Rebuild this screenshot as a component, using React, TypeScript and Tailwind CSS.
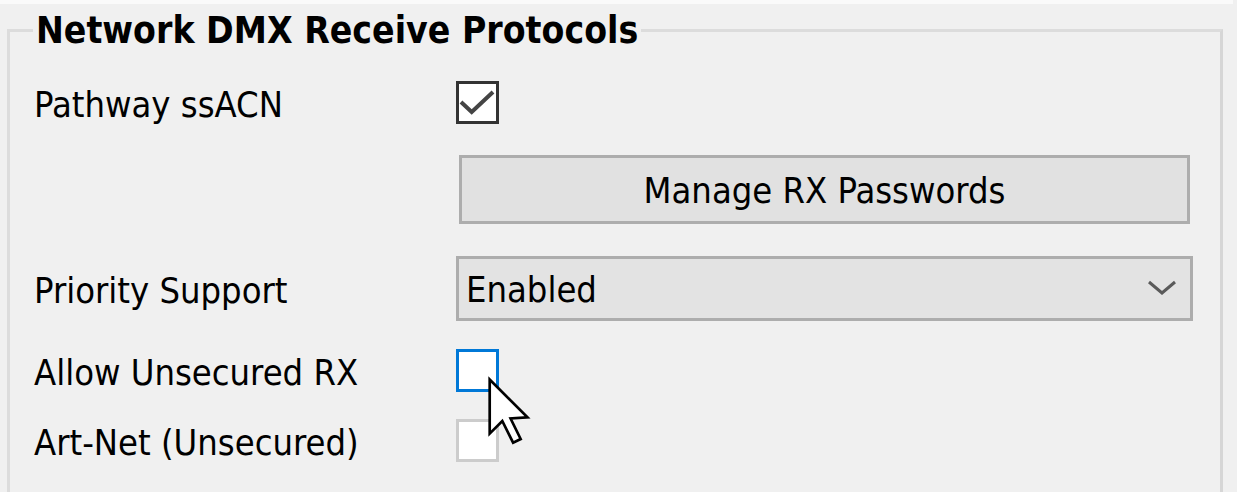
import React from "react";

const font = { fontFamily: '"DejaVu Sans Condensed", "DejaVu Sans", Verdana, sans-serif' };

function Checkbox({ variant }: { variant: "checked" | "focus" | "disabled" }) {
  const border =
    variant === "checked"
      ? "border-[#333333]"
      : variant === "focus"
      ? "border-[#0078d7]"
      : "border-[#cccccc]";
  return (
    <div className={`w-[43px] h-[43px] bg-white border-[3px] ${border} shrink-0`}>
      {variant === "checked" && (
        <svg width="37" height="37" viewBox="0 0 37 37">
          <polyline
            points="2,18 12.7,28 34,8"
            fill="none"
            stroke="#444444"
            strokeWidth="4"
          />
        </svg>
      )}
    </div>
  );
}

function Label({ children }: { children: React.ReactNode }) {
  return (
    <div className="w-[422px] shrink-0 pt-[4px] text-[36px] text-black whitespace-nowrap">{children}</div>
  );
}

export default function App() {
  return (
    <div
      className="relative w-[1237px] h-[492px] overflow-hidden bg-[#f0f0f0] flex flex-col"
      style={font}
    >
      <div className="h-[4px] w-[1233px] bg-[#fafafa] shrink-0" />
      <div className="ml-[7px] mt-[25px] w-[1216px] h-[520px] shrink-0 border-t-[3px] border-l-[3px] border-r-[3px] border-[#dcdcdc] border-r-[#d6d6d6] flex flex-col">
        <div className="mt-[-21px] ml-[23px] px-[3px] w-fit bg-[#f0f0f0] h-[40px] leading-[40px] text-[37px] font-bold text-black whitespace-nowrap">
          Network DMX Receive Protocols
        </div>
        <div className="pl-[24px] pr-[27px] flex flex-col">
          <div className="mt-[30px] h-[43px] flex items-center">
            <Label>Pathway ssACN</Label>
            <Checkbox variant="checked" />
          </div>
          <div className="mt-[31px] h-[69px] flex items-center">
            <div className="w-[422px] shrink-0" />
            <div className="flex-1 mx-[3px] h-full pt-[2px] bg-[#e1e1e1] border-[3px] border-[#adadad] flex items-center justify-center text-[36px] text-black whitespace-nowrap">
              Manage RX Passwords
            </div>
          </div>
          <div className="mt-[32px] h-[65px] flex items-center">
            <Label>Priority Support</Label>
            <div className="flex-1 h-full bg-[#e3e3e3] border-[3px] border-[#adadad] flex items-center justify-between pl-[7px] pr-[13px] text-[36px] text-black">
              <span className="pt-[2px]">Enabled</span>
              <svg width="30" height="17" viewBox="0 0 30 17" className="mt-[-3px]">
                <polyline
                  points="2,3 15,14 28,3"
                  fill="none"
                  stroke="#5a5a5a"
                  strokeWidth="3"
                />
              </svg>
            </div>
          </div>
          <div className="mt-[28px] h-[43px] flex items-center">
            <Label>Allow Unsecured RX</Label>
            <Checkbox variant="focus" />
          </div>
          <div className="mt-[27px] h-[43px] flex items-center">
            <Label>Art-Net (Unsecured)</Label>
            <Checkbox variant="disabled" />
          </div>
        </div>
      </div>
      <svg
        className="absolute left-[486px] top-[376px]"
        width="47"
        height="72"
        viewBox="-1 -1 13 20"
      >
        <path
          d="M0,0 L0,15 L3.5,11.5 L6.5,17.5 L8.6,16.5 L5.8,10.8 L10.5,10.5 Z"
          fill="#ffffff"
          stroke="#000000"
          strokeWidth="0.75"
          strokeLinejoin="miter"
        />
      </svg>
    </div>
  );
}
